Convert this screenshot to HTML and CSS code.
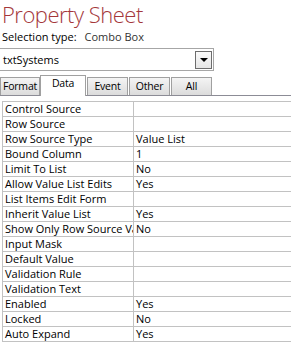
FILE: index.html
```html
<!DOCTYPE html>
<html lang="en">
<head>
    <meta charset="UTF-8">
    <title>Property Sheet</title>
    <link rel="stylesheet" href="styles.css">
</head>
<body>
    <div class="sheet">
        <h1>Property Sheet</h1>
        <div class="selection">Selection type:<span class="sel-type">Combo Box</span></div>

        <div class="combo">
            <span class="combo-text">txtSystems</span>
            <span class="combo-btn">
                <svg width="8" height="4" viewBox="0 0 8 4"><polygon points="0,0 8,0 4,4" fill="#000"/></svg>
            </span>
        </div>

        <div class="tabs">
            <div class="tab">Format</div>
            <div class="tab active">Data</div>
            <div class="tab">Event</div>
            <div class="tab">Other</div>
            <div class="tab">All</div>
        </div>

        <table class="props">
            <tr><td class="name">Control Source</td><td></td></tr>
            <tr><td class="name">Row Source</td><td></td></tr>
            <tr><td class="name">Row Source Type</td><td>Value List</td></tr>
            <tr><td class="name">Bound Column</td><td>1</td></tr>
            <tr><td class="name">Limit To List</td><td>No</td></tr>
            <tr><td class="name">Allow Value List Edits</td><td>Yes</td></tr>
            <tr><td class="name">List Items Edit Form</td><td></td></tr>
            <tr><td class="name">Inherit Value List</td><td>Yes</td></tr>
            <tr><td class="name">Show Only Row Source Values</td><td>No</td></tr>
            <tr><td class="name">Input Mask</td><td></td></tr>
            <tr><td class="name">Default Value</td><td></td></tr>
            <tr><td class="name">Validation Rule</td><td></td></tr>
            <tr><td class="name">Validation Text</td><td></td></tr>
            <tr><td class="name">Enabled</td><td>Yes</td></tr>
            <tr><td class="name">Locked</td><td>No</td></tr>
            <tr><td class="name">Auto Expand</td><td>Yes</td></tr>
        </table>
    </div>
</body>
</html>
```

FILE: styles.css
```css
* {
    margin: 0;
    padding: 0;
    box-sizing: border-box;
}

body {
    font-family: "Open Sans", Arial, sans-serif;
    font-size: 11px;
    background-color: #fff;
    color: #000;
    width: 291px;
    height: 355px;
    overflow: hidden;
}

h1 {
    font-weight: 300;
    font-size: 22px;
    line-height: 28px;
    height: 29px;
    color: #a4373a;
    padding-left: 2px;
    letter-spacing: -0.5px;
}

.selection {
    height: 15px;
    line-height: 15px;
    padding-left: 2px;
    margin-bottom: 4px;
}

.sel-type {
    margin-left: 8px;
    color: #333;
}

.combo {
    width: 214px;
    height: 23px;
    border: 1px solid #a6a6a6;
    border-left: none;
    display: flex;
    align-items: center;
    justify-content: space-between;
    padding: 0 1px 0 3px;
}

.combo-btn {
    width: 17px;
    height: 18px;
    border: 1px solid #6d6d6d;
    background: linear-gradient(#fafafa, #e6e6e6);
    display: flex;
    align-items: center;
    justify-content: center;
}

.tabs {
    display: flex;
    align-items: flex-end;
    height: 21px;
    margin-top: 4px;
    border-bottom: 1px solid #8c8c96;
}

.tab {
    width: 41px;
    height: 18px;
    line-height: 17px;
    font-size: 10.5px;
    text-align: center;
    border: 1px solid #a0a0a0;
    border-bottom: none;
    background: linear-gradient(#f4f4f4, #dcdcdc);
    margin-right: 1px;
    letter-spacing: -0.2px;
    white-space: nowrap;
}

.tab:first-child {
    width: 40px;
    margin-right: 0;
}

.tab.active {
    width: 46px;
    height: 21px;
    line-height: 15px;
    background: #fff;
    margin-bottom: -1px;
}

.props {
    margin-top: 5px;
    margin-left: 2px;
    width: 300px;
    border-collapse: collapse;
    table-layout: fixed;
}

.props td {
    height: 15px;
    line-height: 14px;
    padding: 0 2px;
    border: 1px solid #c2c2c2;
    white-space: nowrap;
    overflow: hidden;
}

.props td.name {
    width: 131px;
}
```
